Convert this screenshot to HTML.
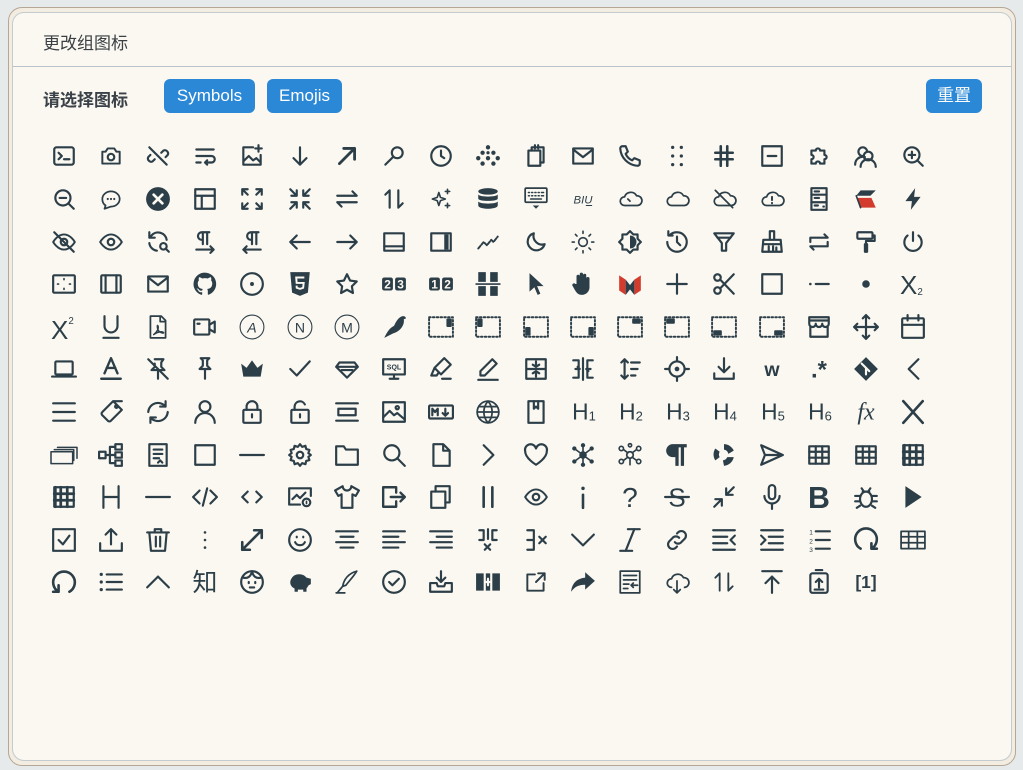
<!DOCTYPE html>
<html><head><meta charset="utf-8">
<style>
html,body{margin:0;padding:0;width:1023px;height:770px;background:#e7eaeb;overflow:hidden;font-family:"Liberation Sans","Noto Sans CJK SC",sans-serif}
.outer{position:absolute;left:8px;top:7px;width:1006px;height:757px;border:1px solid #b5a696;border-radius:14px;background:#f2ece1}
.inner{position:absolute;left:12px;top:12px;width:998px;height:747px;border:1px solid #c3cbcf;border-radius:12px;background:#fbf8f1}
.title{position:absolute;left:43px;top:29px;font-size:17px;color:#3a3f44}
.hr{position:absolute;left:13px;top:66px;width:998px;height:1px;background:#b8c3ca}
.lab{position:absolute;left:43px;top:86px;font-size:17px;font-weight:bold;color:#3a4148}
.btn{position:absolute;top:79px;height:34px;line-height:34px;background:#2b88d6;color:#fff;border-radius:6px;font-size:17px;text-align:center}
#g{position:absolute;left:40px;top:135px;width:900px}
#g svg{position:absolute;width:26px;height:26px;fill:none;stroke:#2c3e48;stroke-width:2;stroke-linejoin:round;stroke-linecap:round;overflow:visible}
#g .f{fill:#2c3e48;stroke:none}
#g .t{fill:#2c3e48;stroke:none;font-family:"Liberation Sans","Noto Sans CJK SC",sans-serif}
</style></head><body>
<div class="outer"></div>
<div class="inner"></div>
<div class="title">更改组图标</div>
<div class="hr"></div>
<div class="lab">请选择图标</div>
<div class="btn" style="left:164px;width:91px">Symbols</div>
<div class="btn" style="left:267px;width:75px">Emojis</div>
<div class="btn" style="left:926px;width:56px">重置</div>
<div id="g"></div>
<script>
var B='#fbf8f1';
function T(s,sz,o){o=o||'';return '<text x="12" y="'+(12+sz*0.36)+'" font-size="'+sz+'" text-anchor="middle" class="t" '+o+'>'+s+'</text>';}
function H(n){return '<text x="2" y="19" font-size="21" class="t">H<tspan font-size="12" dy="1">'+n+'</tspan></text>';}
function DB(x,y,w,h){return '<rect x="1" y="3" width="22" height="18" stroke-dasharray="1.5 2" stroke-width="1.8"/><rect class="f" x="'+x+'" y="'+y+'" width="'+w+'" height="'+h+'" rx="1"/>';}
function CL(e){return '<path stroke-width="1.6" d="M7 18a4 4 0 010-8 6 6 0 0111-1 4.5 4.5 0 011 9z"/>'+(e||'');}
var EYE='<path stroke-width="1.8" d="M2 12s4-7 10-7 10 7 10 7-4 7-10 7S2 12 2 12z"/><circle cx="12" cy="12" r="3"/>';
var TB='<rect x="3" y="4" width="18" height="16"/><path d="M3 9h18M3 14.5h18M9 4v16M15 4v16"/>';
var TC='<rect x="3" y="3" width="18" height="18"/><path d="M9 3v18M15 3v18M3 9h18M3 15h18M4 3v18" stroke-width="2.5"/>';
var MAIL='<rect x="3" y="5" width="18" height="14"/><path d="M3 6l9 7 9-7"/>';
var SQ='<rect x="3" y="3" width="18" height="18"/>';
var I=[
'<rect x="3" y="4" width="18" height="16" rx="2"/><path d="M7 9l3 3-3 3M12 15h5"/>',
'<path stroke-width="1.8" d="M4 8h3l2-3h6l2 3h3v11H4z"/><circle cx="12" cy="13" r="3"/>',
'<path d="M9 15l-2 2a3 3 0 01-4-4l2-2M15 9l2-2a3 3 0 014 4l-2 2M4 4l16 16"/>',
'<path d="M4 6h16M4 12h14a3 3 0 010 6h-6l2-2m-2 2l2 2M4 18h4"/>',
'<path d="M13 4H4v16h16v-9M4 17l5-5 4 4 3-2 4 4M18 2v6M15 5h6"/>',
'<path d="M12 4v16M6 14l6 6 6-6"/>',
'<path d="M5 19L19 5M9 5h10v10" stroke-width="2.6"/>',
'<circle cx="15" cy="9" r="5"/><path d="M11 13l-7 7"/>',
'<circle cx="12" cy="12" r="9"/><path d="M12 7v5l3 2"/>',
'<g class="f"><circle cx="12" cy="4" r="2"/><circle cx="7" cy="9" r="2"/><circle cx="17" cy="9" r="2"/><circle cx="12" cy="14" r="2"/><circle cx="3" cy="14" r="2"/><circle cx="21" cy="14" r="2"/><circle cx="7" cy="19" r="2"/><circle cx="17" cy="19" r="2"/><circle cx="12" cy="9" r="1.5"/></g>',
'<rect x="5" y="7" width="11" height="14"/><path d="M8 7V4h11v14h-3M11 2v3M14 2v3"/>',
MAIL,
'<path d="M5 3h3l2 5-2 2a11 11 0 006 6l2-2 5 2v3a2 2 0 01-2 2A17 17 0 013 5a2 2 0 012-2z"/>',
'<g class="f"><circle cx="8" cy="4" r="1.5"/><circle cx="16" cy="4" r="1.5"/><circle cx="8" cy="12" r="1.5"/><circle cx="16" cy="12" r="1.5"/><circle cx="8" cy="20" r="1.5"/><circle cx="16" cy="20" r="1.5"/></g>',
'<path d="M9 3v18M15 3v18M4 9h16M4 15h16" stroke-width="2.4"/>',
'<rect x="3" y="3" width="18" height="18"/><path d="M8 12h8"/>',
'<path d="M5 7h4a2 2 0 114 0h4v4a2 2 0 110 4v4h-4a2 2 0 10-4 0H5v-4a2 2 0 100-4z"/>',
'<circle cx="9" cy="8" r="4"/><circle cx="14" cy="12" r="4" fill="#fbf8f1"/><path d="M2 20a7 7 0 019-7M7 22a7 7 0 0114 0"/>',
'<circle cx="11" cy="11" r="7"/><path d="M16 16l5 5M8 11h6M11 8v6"/>',
'<circle cx="11" cy="11" r="7"/><path d="M16 16l5 5M8 11h6"/>',
'<path stroke-width="1.6" d="M4 12a8 7 0 118 7l-6 2 1-3a7 7 0 01-3-6z"/><path d="M9 12h.01M12 12h.01M15 12h.01"/>',
'<circle cx="12" cy="12" r="11" class="f"/><path d="M8 8l8 8M16 8l-8 8" stroke="#fbf8f1" stroke-width="2.5"/>',
'<rect x="3" y="3" width="18" height="18"/><path d="M3 9h18M9 9v12"/>',
'<path d="M3 8V3h5M16 3h5v5M21 16v5h-5M8 21H3v-5M3 3l5 5M21 3l-5 5M21 21l-5-5M3 21l5-5"/>',
'<path d="M4 9h5V4M15 4v5h5M20 15h-5v5M9 20v-5H4M3 3l6 6M21 3l-6 6M21 21l-6-6M3 21l6-6"/>',
'<path d="M3 9h18l-4-4M21 15H3l4 4"/>',
'<path d="M8 20V4L4 8M16 4v16l4-4"/>',
'<path stroke-width="1.5" d="M10 6l1.5 4.5L16 12l-4.5 1.5L10 18l-1.5-4.5L4 12l4.5-1.5zM18 3v4M16 5h4M18 16v4M16 18h4"/>',
'<ellipse cx="12" cy="5" rx="9" ry="3" class="f"/><path class="f" d="M3 7.5c0 3 18 3 18 0v4c0 3-18 3-18 0zM3 14c0 3 18 3 18 0v4c0 4-18 4-18 0z"/>',
'<rect x="2" y="2" width="20" height="13" rx="1" stroke-width="1.6"/><path d="M5 6h1M8 6h1M11 6h1M14 6h1M17 6h2M5 9h1M8 9h1M11 9h1M14 9h1M17 9h2M7 12h10" stroke-width="1.4"/><path class="f" d="M9 18h6l-3 3z"/>',
'<text x="12" y="16" font-size="10.5" text-anchor="middle" class="t" font-style="italic">BIU</text><path d="M15 18h5" stroke-width="1"/>',
CL('<path d="M10 12l2 2" stroke-width="1.6"/>'),
CL(),
CL('<path d="M4 4l16 16" stroke-width="1.6"/>'),
CL('<path d="M12 10v3M12 15.5v.5" stroke-width="1.8"/>'),
'<rect x="5" y="2" width="14" height="20"/><path d="M5 8h14M5 15h14M8 5h4M8 11h4M8 18h3M16 19h.5"/>',
'<path d="M7 4h14l-5 5H3z" class="f"/><path d="M3 11h14l4 9H7z" fill="#d33b2c" stroke="none"/><path d="M3 9l4 11" stroke-width="1.5"/>',
'<path class="f" d="M14 2L5 14h6l-1 8 9-12h-6z"/>',
EYE+'<path d="M3 3l18 18"/>',
EYE,
'<path d="M20 10A8 8 0 006 6L4 8M4 3v5h5M4 13a8 8 0 007 7"/><circle cx="17" cy="16" r="3"/><path d="M19 18l3 3"/>',
'<path d="M10 14V3M14 3v11M16 3H9a3.5 3.5 0 000 7h1M4 19h16l-3-3M17 22l3-3"/>',
'<path d="M12 14V3M16 3v11M18 3h-7a3.5 3.5 0 000 7h1M20 19H4l3-3M7 22l-3-3"/>',
'<path d="M21 12H3M9 6l-6 6 6 6"/>',
'<path d="M3 12h18M15 6l6 6-6 6"/>',
'<rect x="3" y="4" width="18" height="16"/><path d="M3 16h18"/>',
'<rect x="3" y="4" width="18" height="16"/><rect class="f" x="15" y="5" width="4" height="14"/>',
'<path d="M3 18l5-6 3 3 4-5 2 2 4-5" stroke-width="1.8" stroke-dasharray="3 1.5"/>',
'<path d="M20 14A8 8 0 0110 4a8 8 0 1010 10z"/>',
'<circle cx="12" cy="12" r="4" stroke-width="1.5"/><path stroke-width="1.5" d="M12 2v2M12 20v2M2 12h2M20 12h2M5 5l1.5 1.5M17.5 17.5L19 19M5 19l1.5-1.5M17.5 6.5L19 5"/>',
'<path d="M12 2l3 3h4v4l3 3-3 3v4h-4l-3 3-3-3H5v-4l-3-3 3-3V5h4z"/><path class="f" d="M12 6a6 6 0 010 12z"/>',
'<path d="M3 12a9 9 0 109-9 9 9 0 00-7 3M4 2v4h4M12 7v5l3 3"/>',
'<path d="M3 4h18l-7 9v7h-4v-7z"/><path d="M6 8h12"/>',
'<path d="M10 2h4v8h-4zM4 10h16l1 11H3zM9 16v5M13 16v5M16 17v4M4 14h16"/>',
'<path d="M4 12V8h16l-3-3M20 12v4H4l3 3"/>',
'<rect x="4" y="3" width="14" height="6" rx="1"/><path d="M18 6h2v5h-8v3M11 14h2v7h-2z"/>',
'<path d="M12 3v8M7 6a8 8 0 1010 0"/>',
'<rect x="2" y="4" width="20" height="16" rx="1"/><path stroke-width="1.5" d="M12 7v1M12 16v1M6 12h1M17 12h1"/>',
'<rect x="3" y="4" width="18" height="16" rx="1"/><path d="M7 4v16M17 4v16"/>',
MAIL,
'<path class="f" d="M12 1.5a10.5 10.5 0 00-3.3 20.5c.5 0 .7-.2.7-.5v-2c-2.9.6-3.5-1.3-3.5-1.3-.5-1.2-1.2-1.5-1.2-1.5-.9-.6.1-.6.1-.6 1 .1 1.6 1 1.6 1 .9 1.6 2.4 1.1 3 .9.1-.7.4-1.1.7-1.4-2.3-.3-4.8-1.2-4.8-5.2 0-1.1.4-2 1.1-2.8-.1-.3-.5-1.3.1-2.8 0 0 .9-.3 2.9 1.1a10 10 0 015.2 0c2-1.4 2.9-1.1 2.9-1.1.6 1.5.2 2.5.1 2.8.7.8 1.1 1.7 1.1 2.8 0 4-2.5 4.9-4.8 5.2.4.3.7.9.7 1.9v2.9c0 .3.2.6.7.5A10.5 10.5 0 0012 1.5z"/>',
'<circle cx="12" cy="12" r="10"/><circle cx="12" cy="12" r="1.8" class="f"/>',
'<path class="f" d="M3 1h18l-1.7 19L12 23l-7.3-3z"/><path d="M16 6H8.5l.4 5h6.5l-.5 4.5L12 16.5l-3-1-.2-2" stroke="#fbf8f1" stroke-width="1.8" stroke-linejoin="miter" stroke-linecap="butt"/>',
'<path d="M12 3l2.8 5.8 6.2.9-4.5 4.4 1 6.2L12 17.3l-5.5 3 1-6.2L3 9.7l6.2-.9z"/>',
'<rect class="f" x="1" y="6" width="10" height="12" rx="2"/><rect class="f" x="13" y="6" width="10" height="12" rx="2"/><text x="6" y="16" font-size="11" font-weight="bold" text-anchor="middle" fill="#fbf8f1" stroke="none">2</text><text x="18" y="16" font-size="11" font-weight="bold" text-anchor="middle" fill="#fbf8f1" stroke="none">3</text>',
'<rect class="f" x="1" y="6" width="10" height="12" rx="2"/><rect class="f" x="13" y="6" width="10" height="12" rx="2"/><text x="6" y="16" font-size="11" font-weight="bold" text-anchor="middle" fill="#fbf8f1" stroke="none">1</text><text x="18" y="16" font-size="11" font-weight="bold" text-anchor="middle" fill="#fbf8f1" stroke="none">2</text>',
'<path class="f" d="M3 1h7v9H3zM14 1h7v9h-7zM3 14h7v9H3zM14 14h7v9h-7z"/><path d="M1 12h22" stroke-width="1.5"/>',
'<path class="f" d="M6 2l13 12h-6l3 7-2.5 1-3-7L6 19z"/>',
'<path class="f" d="M6 12V5a1.5 1.5 0 013 0v5V3a1.5 1.5 0 013 0v7V4a1.5 1.5 0 013 0v7V7a1.5 1.5 0 013 0v8a7 7 0 01-7 7c-3 0-4.5-1.3-6.5-4.5L2.5 14a1.5 1.5 0 012.5-2z"/>',
'<path d="M2 4l6 4v14l-6-4z" fill="#d33b2c" stroke="none"/><path d="M22 4l-6 4v14l6-4z" fill="#d33b2c" stroke="none"/><path class="f" d="M8 8l4 5 4-5v14l-4-5-4 5z"/>',
'<path d="M12 3v18M3 12h18"/>',
'<circle cx="6" cy="6" r="3"/><circle cx="6" cy="18" r="3"/><path d="M8.5 8L21 21M8.5 16L21 3"/>',
SQ,
'<circle cx="4" cy="12" r="1.2" class="f"/><path d="M9 12h12"/>',
'<circle cx="12" cy="12" r="3.5" class="f"/>',
'<text x="0" y="21" font-size="24" class="t">X<tspan font-size="9" dy="1">2</tspan></text>',
'<text x="0" y="23" font-size="24" class="t">X<tspan font-size="9" dy="-14">2</tspan></text>',
'<path d="M6 2v9a6 6 0 0012 0V2M5 22h14"/>',
'<path stroke-width="1.6" d="M5 2h10l4 4v16H5zM14 2v5h5"/><path stroke-width="1.3" d="M8 19c3-2 5-6 4-8s-1 3 1 5 5 2 4 1-5-1-9 2z"/>',
'<rect x="2" y="5" width="14" height="14" rx="1"/><path d="M16 10l5-3v10l-5-3M5 9h2"/>',
'<circle cx="12" cy="12" r="11" stroke-width="1"/><text x="12" y="17" font-size="13" font-style="italic" text-anchor="middle" class="t">A</text>',
'<circle cx="12" cy="12" r="11" stroke-width="1"/><text x="12" y="17" font-size="13" text-anchor="middle" class="t">N</text>',
'<circle cx="12" cy="12" r="11" stroke-width="1"/><text x="12" y="17" font-size="13" text-anchor="middle" class="t">M</text>',
'<path class="f" d="M3 22c3-6 5-9 9-11 2-4 4-8 8-9 2 0 3 1 3 2l-2 1c1 5-3 11-10 13z"/>',
DB(17,4,5,8),DB(2,4,5,8),DB(2,12,5,8),DB(17,12,5,8),DB(14,4,8,5),DB(2,4,8,5),DB(2,15,8,5),DB(14,15,8,5),
'<path d="M3 3h18v6a3 3 0 01-6 0 3 3 0 01-6 0 3 3 0 01-6 0zM4 11v10h16V11M3 6h18"/>',
'<path d="M12 1v22M1 12h22M9 4l3-3 3 3M9 20l3 3 3-3M4 9l-3 3 3 3M20 9l3 3-3 3"/>',
'<rect x="2" y="4" width="20" height="18" rx="1"/><path d="M2 10h20M7 1v5M17 1v5"/>',
'<rect x="4" y="5" width="16" height="12" rx="1"/><path d="M1 19h22"/>',
'<path d="M6 16l6-14 6 14M8 11h8M3 21h18" stroke-width="2.2"/>',
'<path d="M9 3h8l-2 3v4l3 3H6l3-3V7M12 13v8M3 3l18 18"/>',
'<path d="M8 2h8l-2 2v5l3 3H7l3-3V4zM12 12v9"/>',
'<path class="f" d="M2 7l5 4 5-7 5 7 5-4-2 12H4z"/>',
'<path d="M3 12l6 6L21 5"/>',
'<path d="M5 6h14l3 4-10 10L2 10zM2 10h20M7 13h10"/>',
'<rect x="2" y="3" width="20" height="14"/><path d="M12 17v3M8 21h8"/><text x="12" y="12.5" font-size="6.5" font-weight="bold" text-anchor="middle" class="t">SQL</text>',
'<path d="M15 2l6 6-9 9-6-6zM6 11l-3 7h5l2-3M13 21h8"/>',
'<path d="M16 3l4 4L9 18H5v-4zM3 22h18"/>',
'<path d="M3 3h18M3 21h18M3 12h18M12 5v5M9 8l3 2 3-2M12 19v-5M9 16l3-2 3 2M3 3v18M21 3v18"/>',
'<path d="M12 2v20M3 4h5v16H3M21 4h-5v16h5M5 12h4l-2-2M19 12h-4l2 2"/>',
'<path d="M7 3v18M4 6l3-3 3 3M4 18l3 3 3-3M13 6h8M13 12h6M13 18h4"/>',
'<circle cx="12" cy="12" r="7"/><circle cx="12" cy="12" r="2.2" class="f"/><path d="M12 1v4M12 19v4M1 12h4M19 12h4"/>',
'<path d="M12 2v13M7 10l5 5 5-5M3 16v5h18v-5"/>',
T('w',18,'font-weight="bold"'),
T('.*',22,'font-weight="bold"'),
'<path class="f" d="M12 1l11 11-11 11L1 12z"/><path d="M8 7l4 4v6M12 11l3 3" stroke="#fbf8f1" stroke-width="2"/>',
'<path d="M17 3l-9 9 9 9"/>',
'<path d="M2 4h20M2 12h20M2 20h20"/>',
'<path d="M14 2l8 8-10 10a2 2 0 01-3 0l-5-5a2 2 0 010-3L14 2zM14 2h8v0"/><circle cx="17" cy="7" r="1.2"/>',
'<path d="M21 12a9 9 0 01-16 5M3 12a9 9 0 0116-5M19 2v5h-5M5 22v-5h5"/>',
'<circle cx="12" cy="7" r="5"/><path d="M3 22a9 9 0 0118 0"/>',
'<rect x="4" y="10" width="16" height="12" rx="1"/><path d="M7 10V7a5 5 0 0110 0v3M12 14v3"/>',
'<rect x="4" y="10" width="16" height="12" rx="1"/><path d="M7 10V7a5 5 0 019.5-2M12 14v3"/>',
'<path d="M2 4h20M2 20h20"/><rect x="4" y="9" width="16" height="6"/>',
'<rect x="2" y="3" width="20" height="18"/><path d="M2 17l6-6 4 4 3-2 7 6"/><circle cx="15" cy="8" r="1.5"/>',
'<rect x="1" y="6" width="22" height="12" rx="1"/><path d="M4 15V9l2.5 3L9 9v6M16 9v6M13.5 13l2.5 2.5 2.5-2.5"/>',
'<circle cx="12" cy="12" r="10" stroke-width="1.6"/><path stroke-width="1.6" d="M2 12h20M12 2a15 15 0 010 20M12 2a15 15 0 000 20M4 7h16M4 17h16"/>',
'<rect x="5" y="2" width="14" height="20"/><path d="M10 2v7l2-2 2 2V2"/>',
H(1),H(2),H(3),H(4),H(5),H(6),
'<text x="12" y="19" font-size="22" font-style="italic" text-anchor="middle" class="t" style="font-family:\'Liberation Serif\',serif">fx</text>',
'<path d="M3 2l18 20M21 2L3 22" stroke-width="2.4"/>',
'<rect x="0" y="9" width="20" height="11" stroke-width="1.4"/><path d="M3 7h18v10M6 5h18v10" stroke-width="1.4"/>',
'<rect x="1" y="9" width="6" height="6"/><rect x="16" y="2" width="6" height="5"/><rect x="16" y="9.5" width="6" height="5"/><rect x="16" y="17" width="6" height="5"/><path d="M7 12h9M11 4.5v15M11 4.5h5M11 19.5h5"/>',
'<rect x="4" y="2" width="16" height="20"/><path d="M8 7h8M8 11h8M8 15h5M12 19l2-2 2 2"/>',
SQ,
'<path d="M1 12h22"/>',
'<circle cx="12" cy="12" r="3"/><path d="M12 2l2 2.5 3-1 .7 3 3 .8-1 3L22 12l-2.3 1.7 1 3-3 .8-.7 3-3-1L12 22l-2-2.5-3 1-.7-3-3-.8 1-3L2 12l2.3-1.7-1-3 3-.8.7-3 3 1z"/>',
'<path d="M2 4h7l2 3h11v14H2z"/>',
'<circle cx="10" cy="10" r="7"/><path d="M15 15l7 7"/>',
'<path d="M5 2h9l6 6v14H5zM14 2v6h6"/>',
'<path d="M8 3l9 9-9 9"/>',
'<path d="M12 21S2 15 2 8.5A5 5 0 0112 6a5 5 0 0110 2.5C22 15 12 21 12 21z"/>',
'<g class="f"><circle cx="12" cy="12" r="3.5"/><circle cx="4" cy="6" r="2"/><circle cx="20" cy="6" r="2"/><circle cx="4" cy="18" r="2"/><circle cx="20" cy="18" r="2"/><circle cx="12" cy="3" r="2"/><circle cx="12" cy="21" r="2"/></g><path d="M4 6l16 12M20 6L4 18M12 3v18" stroke-width="1.5"/>',
'<circle cx="12" cy="12" r="3" stroke-width="1.6"/><circle cx="4" cy="6" r="2" stroke-width="1.5"/><circle cx="20" cy="6" r="2" stroke-width="1.5"/><circle cx="4" cy="18" r="2" stroke-width="1.5"/><circle cx="20" cy="18" r="2" stroke-width="1.5"/><circle cx="12" cy="3" r="1.5" stroke-width="1.5"/><path d="M6 7l4 3M18 7l-4 3M6 17l4-3M18 17l-4-3M12 15v6" stroke-width="1.5"/>',
'<path class="f" d="M8 2h13v3h-2.5v17h-3V5h-2v17h-3v-8H8a6 6 0 010-12z"/>',
'<path d="M12 2a10 10 0 019 6l-5 3a5 5 0 00-4-4zM21 14a10 10 0 01-9 8l-1-5a5 5 0 004-3zM4 17a10 10 0 010-11l4 3a5 5 0 000 5z" class="f"/>',
'<path d="M2 3l20 9-20 9 3.5-9zM5.5 12H22"/>',
TB,TB,TC,
TC,
'<path d="M5 2v20M19 2v20M5 12h14"/>',
'<path d="M1 12h22"/>',
'<path d="M7 6l-6 6 6 6M17 6l6 6-6 6M14 4l-4 16"/>',
'<path d="M8 7l-5 5 5 5M16 7l5 5-5 5"/>',
'<path d="M12 19H2V4h20v7M5 14l4-4 3 3 5-5"/><circle cx="18" cy="17" r="3.5"/><path d="M18 16v2" stroke-width="1.5"/>',
'<path d="M8 2L1 6l3 5 3-1.5V22h10V9.5l3 1.5 3-5-7-4a4 4 0 01-8 0z"/>',
'<path d="M14 3H2v18h12M14 3v5M14 16v5M9 12h13M18 8l4 4-4 4" stroke-width="2.2"/>',
'<rect x="3" y="7" width="13" height="15"/><path d="M7 7V2h13v15h-4"/>',
'<path d="M8 3v18M16 3v18" stroke-width="2.4"/>',
EYE,
'<path d="M12 10v12" stroke-width="2.4"/><circle cx="12" cy="4" r="1.6" class="f"/>',
T('?',26),
T('S',24)+'<path d="M1 12h22"/>',
'<path d="M3 21l7-7M10 20v-6H4M21 3l-7 7M14 4v6h6"/>',
'<rect x="9" y="1" width="6" height="13" rx="3"/><path d="M5 11a7 7 0 0014 0M12 18v5"/>',
T('B',28,'font-weight="bold"'),
'<ellipse cx="12" cy="14" rx="5.5" ry="7"/><path d="M8 4l2 3M16 4l-2 3M6.5 11H2M17.5 11H22M6.5 16H2M17.5 16H22M6.5 20l-3 2M17.5 20l3 2M9 7h6"/>',
'<path class="f" d="M5 2l15 10L5 22z"/>',
'<rect x="2" y="2" width="20" height="20"/><path d="M7 12l4 4 6-8"/>',
'<path d="M12 16V2M7 7l5-5 5 5M2 15v7h20v-7"/>',
'<path d="M2 5h20M9 5V2h6v3M4 5l1.5 17h13L20 5M10 9v9M14 9v9"/>',
'<g class="f"><circle cx="12" cy="5" r="1.2"/><circle cx="12" cy="12" r="1.2"/><circle cx="12" cy="19" r="1.2"/></g>',
'<path d="M3 21L21 3M14 3h7v7M3 14v7h7" stroke-width="2.4"/>',
'<circle cx="12" cy="12" r="10"/><path d="M7.5 14a5 5 0 009 0M9 9v.5M15 9v.5"/>',
'<path d="M2 4h20M6 9h12M2 14h20M6 19h12"/>',
'<path d="M2 4h20M2 9h14M2 14h20M2 19h14"/>',
'<path d="M2 4h20M8 9h14M2 14h20M8 19h14"/>',
'<path d="M12 2v9M4 3h4v9H4M20 3h-4v9h4M9 16l5 5M14 16l-5 5"/>',
'<path d="M4 3h6v18H4M4 12h6M15 9l6 6M21 9l-6 6"/>',
'<path d="M2 7l10 10 10-10"/>',
'<path d="M10 2h11M3 22h11M16 2L8 22"/>',
'<path d="M10 14a4 4 0 006 0l3-3a4 4 0 00-6-6l-1 1M14 10a4 4 0 00-6 0l-3 3a4 4 0 006 6l1-1"/>',
'<path d="M2 3h20M2 21h20M2 9h13M2 15h13M22 8l-4 4 4 4"/>',
'<path d="M2 3h20M2 21h20M9 9h13M9 15h13M2 8l4 4-4 4"/>',
'<path d="M9 4h13M9 12h13M9 20h13"/><text x="3" y="7" font-size="6" class="t">1</text><text x="3" y="15" font-size="6" class="t">2</text><text x="3" y="23" font-size="6" class="t">3</text>',
'<path d="M7 20a10 10 0 1110 0M17 15v5h5" stroke-width="2.4"/>',
'<rect x="1" y="4" width="22" height="16" stroke-width="1.6"/><path d="M1 9h22M1 14.5h22M8 4v16M16 4v16" stroke-width="1.6"/>',
'<path d="M17 21a10 10 0 10-10 0M7 15v6H2" stroke-width="2.4"/>',
'<g class="f"><circle cx="3" cy="5" r="1.5"/><circle cx="3" cy="12" r="1.5"/><circle cx="3" cy="19" r="1.5"/></g><path d="M8 5h14M8 12h14M8 19h14"/>',
'<path d="M2 17l10-10 10 10"/>',
T('知',23),
'<circle cx="12" cy="12" r="10"/><path d="M4 8c4 1 7-1 8-6 1 5 4 7 8 6M9 12v1M15 12v1M10 17h4"/>',
'<path class="f" d="M4 9a8 7 0 0114-1l4 1v5l-2 1-2 3v3h-3v-2h-5v2H7v-3a6 6 0 01-3-9z"/><circle cx="17" cy="11" r="1" fill="#fbf8f1"/>',
'<path stroke-width="1.6" d="M21 2C13 4 9 10 8 16l3-1c3-4 7-8 10-13zM3 22l5-6M2 22h8"/>',
'<circle cx="12" cy="12" r="10"/><path d="M7.5 12l3 3 6-6"/>',
'<path d="M12 2v10M8 8l4 4 4-4M2 13h6l1 3h6l1-3h6v8H2z"/>',
'<path class="f" d="M1 4h22v16H1z"/><path d="M9 4v16M15 4v16M12 9v6M9.5 12h5" stroke="#fbf8f1" stroke-width="2"/>',
'<path stroke-width="1.8" d="M14 4h6v6M20 4l-8 8M11 5H4v15h15v-7"/>',
'<path class="f" d="M14 3l9 8-9 8v-4.5C7 14.5 4 17 1 21 2 13 6 9 14 8z"/>',
'<rect x="3" y="2" width="18" height="20" stroke-width="1.6"/><path stroke-width="1.6" d="M6 6h12M6 10h12M6 14h5M6 18h4M13 15h6M15 13l-2 2 2 2"/>',
'<path stroke-width="1.6" d="M7 17a4 4 0 010-8 6 6 0 0111-1 4.5 4.5 0 011 9M12 11v11M9 19l3 3 3-3"/>',
'<path stroke-width="1.7" d="M8 20V4L4 8M16 4v16l4-4"/>',
'<path d="M3 2h18M12 22V7M6 13l6-6 6 6"/>',
'<rect x="4" y="4" width="16" height="18" rx="2"/><path d="M12 17V9M9 12l3-3 3 3M9 1h6M8 19h8"/>',
T('[1]',16,'font-weight="bold"')
];
var h='';
for(var k=0;k<I.length;k++){var r=Math.floor(k/19),c=k%19;
var x=(c*47.2+23.6-13).toFixed(1),y=(r*42.6+21.3-13).toFixed(1);
h+='<svg viewBox="0 0 24 24" style="left:'+x+'px;top:'+y+'px">'+I[k]+'</svg>';}
document.getElementById('g').innerHTML=h;
</script>
</body></html>
